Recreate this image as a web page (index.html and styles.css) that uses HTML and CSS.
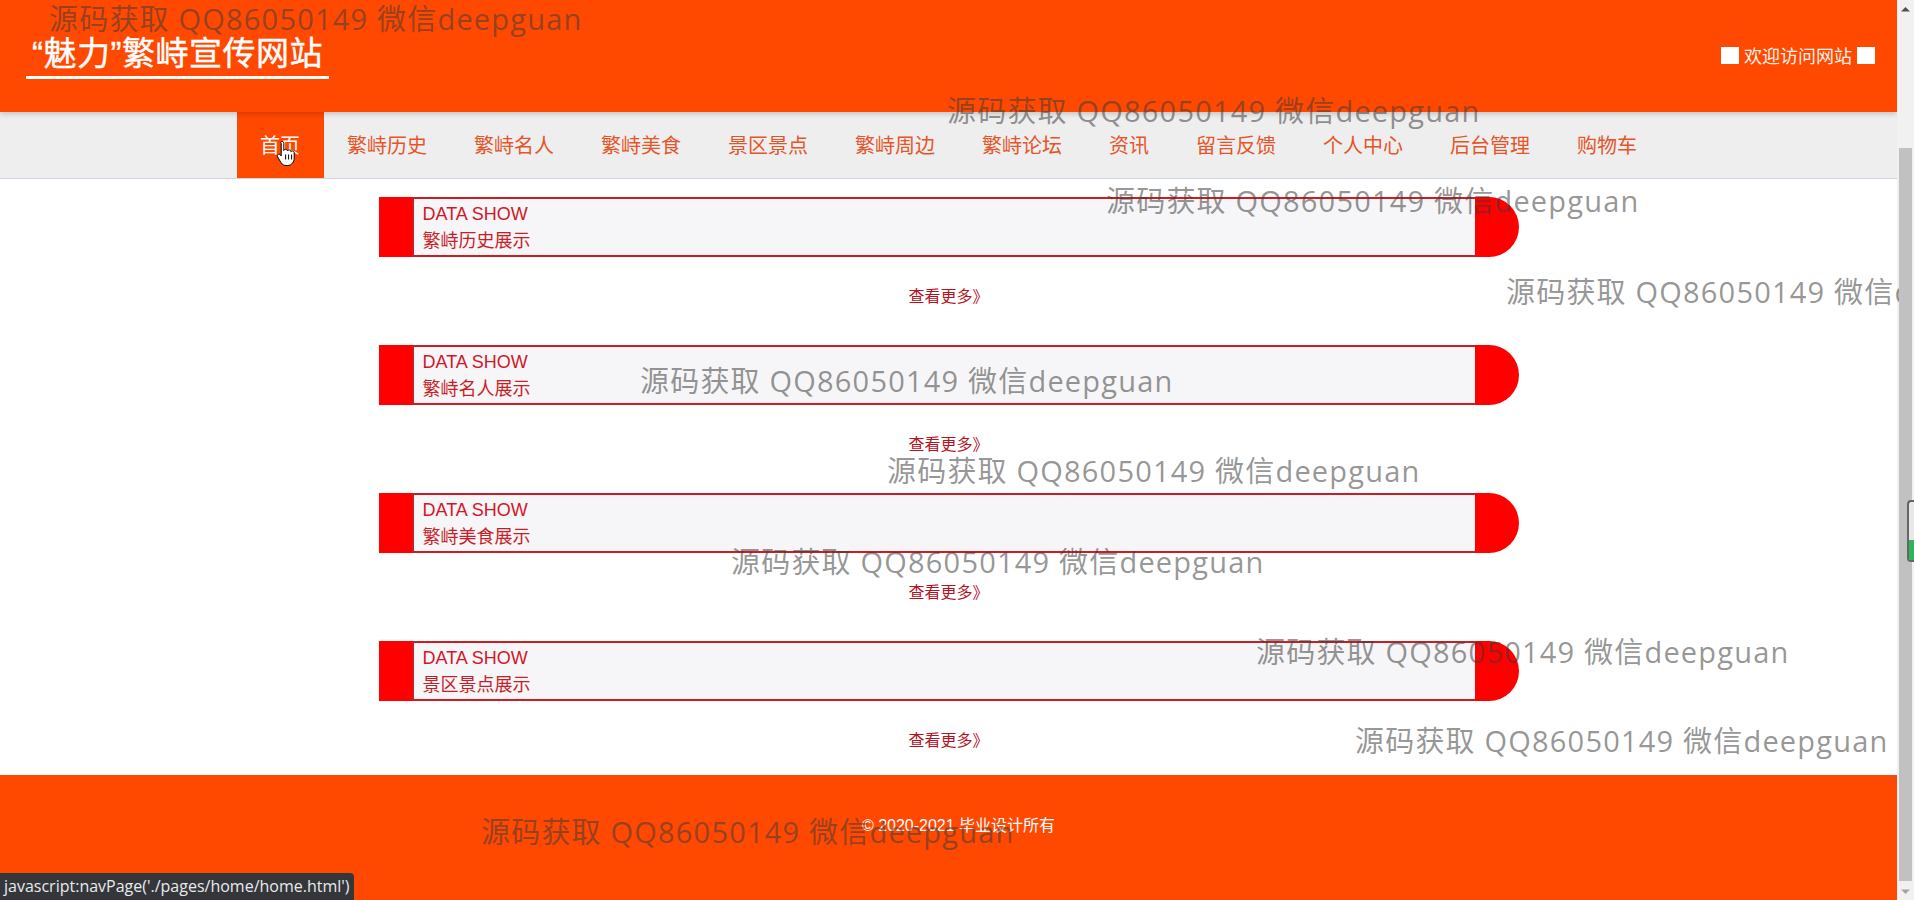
FILE: index.html
```html
<!DOCTYPE html>
<html lang="zh-CN">
<head>
<meta charset="utf-8">
<title>“魅力”繁峙宣传网站</title>
<link rel="stylesheet" href="styles.css">
</head>
<body>
<div class="window">
  <div class="page">
    <header class="top">
      <div class="brand"><span class="q">“</span>魅力<span class="q">”</span>繁峙宣传网站</div>
      <div class="welcome"><i class="sq"></i><span class="wtext">欢迎访问网站</span><i class="sq"></i></div>
    </header>
    <nav class="nav">
      <a class="nav-item active">首页</a>
      <a class="nav-item">繁峙历史</a>
      <a class="nav-item">繁峙名人</a>
      <a class="nav-item">繁峙美食</a>
      <a class="nav-item">景区景点</a>
      <a class="nav-item">繁峙周边</a>
      <a class="nav-item">繁峙论坛</a>
      <a class="nav-item">资讯</a>
      <a class="nav-item">留言反馈</a>
      <a class="nav-item">个人中心</a>
      <a class="nav-item">后台管理</a>
      <a class="nav-item">购物车</a>
    </nav>
    <main class="content">
      <section class="block">
        <div class="card"><div class="card-l"></div><div class="card-b"><div class="t1">DATA SHOW</div><div class="t2">繁峙历史展示</div></div><div class="card-r"></div></div>
        <a class="more">查看更多》</a>
      </section>
      <section class="block">
        <div class="card"><div class="card-l"></div><div class="card-b"><div class="t1">DATA SHOW</div><div class="t2">繁峙名人展示</div></div><div class="card-r"></div></div>
        <a class="more">查看更多》</a>
      </section>
      <section class="block">
        <div class="card"><div class="card-l"></div><div class="card-b"><div class="t1">DATA SHOW</div><div class="t2">繁峙美食展示</div></div><div class="card-r"></div></div>
        <a class="more">查看更多》</a>
      </section>
      <section class="block last">
        <div class="card"><div class="card-l"></div><div class="card-b"><div class="t1">DATA SHOW</div><div class="t2">景区景点展示</div></div><div class="card-r"></div></div>
        <a class="more">查看更多》</a>
      </section>
    </main>
    <footer class="foot">© 2020-2021 毕业设计所有</footer>
  </div>
  <div class="sbar">
    <div class="sb-btn"><svg width="9" height="6" viewBox="0 0 9 6"><path d="M0 5.5 4.5 1 9 5.5z" fill="#505050"/></svg></div>
    <div class="sb-track"><div class="sb-thumb"></div></div>
    <div class="sb-btn"><svg width="9" height="6" viewBox="0 0 9 6"><path d="M0 .5 4.5 5 9 .5z" fill="#a3a3a3"/></svg></div>
  </div>
</div>

<div class="wm-layer">
  <div class="wm wm1">源码获取 QQ86050149 微信deepguan</div>
  <div class="wm wm2">源码获取 QQ86050149 微信deepguan</div>
  <div class="wm wm3">源码获取 QQ86050149 微信deepguan</div>
  <div class="wm wm4">源码获取 QQ86050149 微信deepguan</div>
  <div class="wm wm5">源码获取 QQ86050149 微信deepguan</div>
  <div class="wm wm6">源码获取 QQ86050149 微信deepguan</div>
  <div class="wm wm7">源码获取 QQ86050149 微信deepguan</div>
  <div class="wm wm8">源码获取 QQ86050149 微信deepguan</div>
  <div class="wm wm9">源码获取 QQ86050149 微信deepguan</div>
  <div class="wm wm10">源码获取 QQ86050149 微信deepguan</div>
</div>

<div class="cursor"><svg width="20" height="27" viewBox="0 0 20 27"><path d="M6 1.5c1 0 1.8.8 1.8 1.8V10.5c.3-.8 1-1.2 1.8-1.2 1 0 1.7.7 1.8 1.6.3-.6 1-1 1.7-1 1 0 1.8.8 1.8 1.8.3-.5.9-.8 1.5-.8 1 0 1.8.8 1.8 1.8v5.5c0 3.5-2.5 7.3-6.5 7.3H10c-2.2 0-3.6-1-4.800-2.6L1.6 16.9c-.6-.8-.4-1.9.4-2.4.8-.5 1.8-.3 2.4.4l.8 1V3.3C4.2 2.3 5 1.5 6 1.5z" fill="#fff" stroke="#000" stroke-width="1"/><path d="M9.6 14.5v5M12.6 14.5v5M15.6 14.5v5" stroke="#000" stroke-width="1"/></svg></div>

<div class="sidetab"><div class="sidetab-g"></div></div>

<div class="status">javascript:navPage('./pages/home/home.html')</div>
</body>
</html>
```

FILE: styles.css
```css
html, body {
  margin: 0;
  padding: 0;
  height: 900px;
  overflow: hidden;
  background: #fff;
}
body {
  font-family: "Liberation Sans", "Noto Sans CJK SC", sans-serif;
  position: relative;
}
.window {
  display: flex;
  height: 900px;
}
.page {
  flex: 1;
  min-width: 0;
  display: flex;
  flex-direction: column;
  overflow: hidden;
}

/* header */
.top {
  height: 112px;
  flex: none;
  background: #ff4800;
  display: flex;
  justify-content: space-between;
  align-items: flex-start;
  padding: 0 22px 0 26px;
  box-sizing: border-box;
  position: relative;
  z-index: 2;
  box-shadow: 0 2px 5px rgba(0,0,0,0.18);
}
.brand {
  margin-top: 34px;
  padding: 0 6px 2px 6px;
  line-height: 40px;
  font-size: 33px;
  font-weight: normal;
  letter-spacing: 0.5px;
  color: #fff;
  border-bottom: 3px solid #fff;
  font-family: "Liberation Sans", "Noto Sans CJK SC", sans-serif;
  -webkit-text-stroke: 0.4px #fff;
}
.brand .q {
  font-family: "Liberation Sans", sans-serif;
}
.welcome {
  margin-top: 46px;
  display: flex;
  align-items: center;
  gap: 5px;
  color: #fff3ea;
  font-size: 18px;
  line-height: 18px;
  font-family: "Noto Sans CJK SC", sans-serif;
}
.sq {
  display: inline-block;
  width: 18px;
  height: 17px;
  background: #fff;
}

/* nav */
.nav {
  flex: none;
  height: 66px;
  background: #eeeeee;
  border-bottom: 1px solid #cdd5e3;
  display: flex;
  justify-content: center;
}
.nav-item {
  padding: 0 23.5px;
  line-height: 66px;
  font-size: 20px;
  color: #e4562a;
  font-family: "Noto Sans CJK SC", sans-serif;
  text-decoration: none;
}
.nav-item.active {
  background: #ff4800;
  color: #fff;
}

/* content */
.content {
  flex: none;
  height: 596px;
  box-sizing: border-box;
  padding-top: 18px;
  display: flex;
  flex-direction: column;
  align-items: center;
  gap: 40px;
}
.block {
  width: 1140px;
  display: flex;
  flex-direction: column;
  align-items: center;
}
.card {
  width: 100%;
  height: 60px;
  display: flex;
}
.card-l {
  width: 33px;
  background: #ff0000;
}
.card-b {
  flex: 1;
  background: #f6f5f7;
  border: 2px solid #cc1d22;
  border-right: none;
  padding: 3px 0 0 9px;
}
.card-r {
  width: 44px;
  background: #ff0000;
  border-radius: 0 30px 30px 0;
}
.t1 {
  font-size: 18px;
  line-height: 25px;
  color: #d0182a;
}
.t2 {
  font-size: 18px;
  line-height: 25px;
  color: #c81e28;
  font-family: "Noto Sans CJK SC", sans-serif;
}
.more {
  margin-top: 28px;
  line-height: 20px;
  font-size: 16px;
  color: #b3121e;
  font-family: "Noto Sans CJK SC", sans-serif;
}

/* footer */
.foot {
  flex: 1;
  background: #ff4800;
  color: #fff;
  font-size: 16px;
  line-height: 20px;
  text-align: center;
  padding: 41px 0 0 20px;
}

/* scrollbar */
.sbar {
  width: 17px;
  flex: none;
  background: #f1f1f1;
  display: flex;
  flex-direction: column;
}
.sb-btn {
  height: 17px;
  display: flex;
  align-items: center;
  justify-content: center;
}
.sb-track {
  flex: 1;
  padding-top: 131px;
  padding-bottom: 2px;
  display: flex;
  flex-direction: column;
}
.sb-thumb {
  flex: 1;
  margin: 0 2px;
  background: #c1c1c1;
}

/* watermarks */
.wm-layer {
  position: absolute;
  left: 0;
  top: 0;
  width: 1899px;
  height: 900px;
  overflow: hidden;
  z-index: 10;
  pointer-events: none;
}
.wm {
  position: absolute;
  font-family: "Open Sans", "Noto Sans CJK SC", sans-serif;
  font-size: 29px;
  letter-spacing: 1.2px;
  line-height: 32px;
  color: rgba(60,60,60,0.55);
  white-space: nowrap;
}
.wm1 { left: 49px; top: 3px; }
.wm2 { left: 947px; top: 95px; }
.wm3 { left: 1106px; top: 185px; }
.wm4 { left: 1506px; top: 276px; }
.wm5 { left: 640px; top: 365px; }
.wm6 { left: 887px; top: 455px; }
.wm7 { left: 731px; top: 546px; }
.wm8 { left: 1256px; top: 636px; }
.wm9 { left: 1355px; top: 725px; }
.wm10 { left: 481px; top: 816px; }

.cursor {
  position: absolute;
  left: 276px;
  top: 140px;
  z-index: 12;
  line-height: 0;
}

.sidetab {
  position: absolute;
  left: 1907px;
  top: 500px;
  width: 7px;
  height: 62px;
  box-sizing: border-box;
  border: 2px solid #666;
  border-right: none;
  border-radius: 4px 0 0 4px;
  background: #e8e8e8;
  display: flex;
  flex-direction: column;
  justify-content: flex-end;
  z-index: 11;
}
.sidetab-g {
  height: 20px;
  background: #2fb45a;
}

.status {
  position: fixed;
  left: 0;
  bottom: 0;
  height: 27px;
  line-height: 27px;
  padding: 0 4px 0 4px;
  background: #35363a;
  color: #e8eaed;
  font-size: 16px;
  font-family: "Open Sans", sans-serif;
  border-top-right-radius: 4px;
  z-index: 20;
  white-space: nowrap;
}
```
